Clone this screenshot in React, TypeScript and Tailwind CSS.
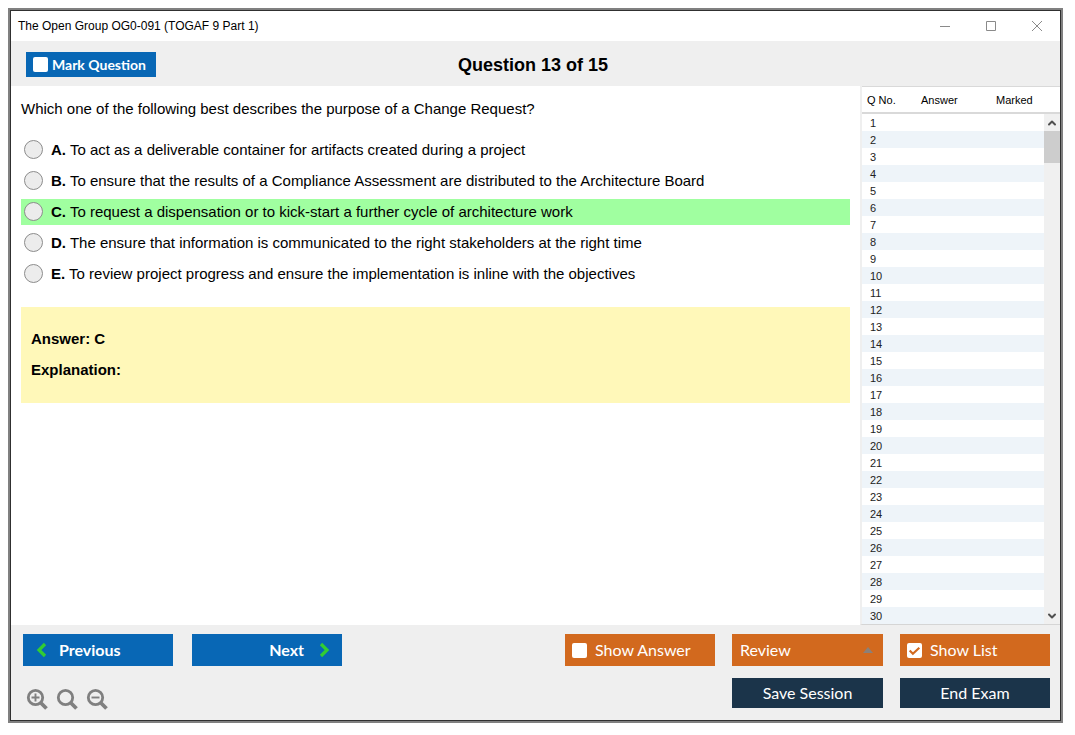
import { useState, type ReactNode } from "react"
import { ChevronDown, ChevronUp } from "lucide-react"
import clsx from "clsx"

const OPTIONS = [
  { letter: "A", text: "To act as a deliverable container for artifacts created during a project" },
  { letter: "B", text: "To ensure that the results of a Compliance Assessment are distributed to the Architecture Board" },
  { letter: "C", text: "To request a dispensation or to kick-start a further cycle of architecture work" },
  { letter: "D", text: "The ensure that information is communicated to the right stakeholders at the right time" },
  { letter: "E", text: "To review project progress and ensure the implementation is inline with the objectives" },
]

const CORRECT = "C"
const ROWS = Array.from({ length: 30 }, (_, i) => i + 1)

function TitleBar() {
  return (
    <div className="flex h-[30px] items-center justify-between bg-white pl-[7px] pr-[17px]">
      <span className="text-[12px] leading-4">The Open Group OG0-091 (TOGAF 9 Part 1)</span>
      <div className="flex gap-[34px] pb-px text-[#8a8a8a]">
        <button aria-label="Minimize">
          <svg width="12" height="12" viewBox="0 0 12 12" stroke="currentColor" fill="none">
            <path d="M1 6.5h10" />
          </svg>
        </button>
        <button aria-label="Maximize">
          <svg width="12" height="12" viewBox="0 0 12 12" stroke="currentColor" fill="none">
            <path d="M1.500 1.500h9v9h-9z" />
          </svg>
        </button>
        <button aria-label="Close">
          <svg width="12" height="12" viewBox="0 0 12 12" stroke="currentColor" fill="none">
            <path d="M1 1l10 10M11 1L1 11" />
          </svg>
        </button>
      </div>
    </div>
  )
}

interface CheckButtonProps {
  label: string
  defaultChecked?: boolean
  className?: string
}

function CheckButton({ label, defaultChecked, className }: CheckButtonProps) {
  return (
    <label className={clsx("flex items-center pl-[7px] text-white", className)}>
      <span className="relative flex">
        <input
          type="checkbox"
          defaultChecked={defaultChecked}
          className="peer size-[15px] appearance-none rounded-[2px] bg-white"
        />
        <svg
          viewBox="0 0 14 14"
          className="pointer-events-none absolute inset-0 hidden size-[15px] peer-checked:block"
          fill="none"
          stroke="#d2691e"
          strokeWidth="2"
        >
          <path d="M2.500 7l3 3 6-5.500" />
        </svg>
      </span>
      {label}
    </label>
  )
}

function ZoomButton({ label, children }: { label: string; children?: ReactNode }) {
  return (
    <button aria-label={label} className="text-[#808080]">
      <svg width="22" height="22" viewBox="0 0 22 22" fill="none" stroke="currentColor">
        <circle cx="9.500" cy="9.500" r="7.200" strokeWidth="2.800" />
        <path d="M14.500 14.500l6 6" strokeWidth="3.800" />
        <g strokeWidth="1.900">{children}</g>
      </svg>
    </button>
  )
}

function QuestionList() {
  return (
    <div className="flex w-[200px] shrink-0 border-b border-l-2 border-b-[#d5d5d5] border-l-[#efefef]">
      <table className="flex-1 border-separate border-spacing-0 text-[11px] leading-4 text-[#222]">
        <thead>
          <tr className="h-7 text-left text-black *:border-t *:border-b-2 *:border-[#d9d9d9] *:py-0 *:font-normal">
            <th className="w-[57px] pl-[5px]">Q No.</th>
            <th className="w-[62px] pl-[2px]">Answer</th>
            <th className="pl-[15px]">Marked</th>
          </tr>
        </thead>
        <tbody>
          {ROWS.map((n) => (
            <tr key={n} className="h-[17px] even:bg-[#eef4f9]">
              <td className="p-0 pl-2">{n}</td>
              <td className="p-0" />
              <td className="p-0" />
            </tr>
          ))}
        </tbody>
      </table>
      <div className="flex w-4 flex-col">
        <div className="h-7 border-t border-b-2 border-[#d9d9d9]" />
        <div className="flex flex-1 flex-col items-center bg-[#f0f0f0]">
          <div className="flex h-[17px] items-center">
            <ChevronUp size={12} strokeWidth={4} color="#505050" />
          </div>
          <div className="h-8 w-full bg-[#cdcdcd]" />
          <div className="mt-auto flex h-[17px] items-center">
            <ChevronDown size={12} strokeWidth={4} color="#505050" />
          </div>
        </div>
      </div>
    </div>
  )
}

export default function App() {
  const [selected, setSelected] = useState<string | null>(null)

  return (
    <div className="bg-white pb-3 pl-2 pr-3 pt-2 font-['Liberation_Sans',Arial,sans-serif] text-black">
      <div className="border-2 border-[#808080]">
        <div className="border border-[#303030]">
          <TitleBar />

          <header className="grid h-[45px] grid-cols-[1fr_auto_1fr] items-center bg-[#efefef] pl-[15px] pr-5 pt-[2px]">
            <CheckButton
              label="Mark Question"
              className="h-[25px] w-[130px] gap-1 bg-[#0867b5] font-['Lato',sans-serif] text-[14px] font-bold"
            />
            <h1 className="text-[18px] font-bold leading-6">Question 13 of 15</h1>
          </header>

          <div className="flex bg-white">
            <main className="min-w-0 flex-1 px-[10px] pt-3 text-[15px]">
              <p className="leading-[22px]">Which one of the following best describes the purpose of a Change Request?</p>
              <div className="mt-[17px] flex flex-col gap-[5px]">
                {OPTIONS.map((o) => (
                  <label
                    key={o.letter}
                    className={clsx("flex min-h-[26px] items-center gap-2 pb-px pl-[3px] leading-[23px]", o.letter === CORRECT && "bg-[#a0ffa0]")}
                  >
                    <input
                      type="radio"
                      name="answer"
                      checked={selected === o.letter}
                      onChange={() => setSelected(o.letter)}
                      className="size-[19px] shrink-0 appearance-none rounded-full border border-[#8c8c8c] bg-[#ececec] checked:bg-[#808080]"
                    />
                    <span>
                      <b>{o.letter}.</b> {o.text}
                    </span>
                  </label>
                ))}
              </div>
              <section className="mt-5 flex flex-col gap-2 bg-[#fff8b9] px-[10px] pb-[22px] pt-5 font-bold leading-[23px]">
                <p>Answer: C</p>
                <p>Explanation:</p>
              </section>
            </main>
            <QuestionList />
          </div>

          <footer className="flex flex-col gap-3 bg-[#efefef] pb-3 pl-3 pr-[10px] pt-[9px] font-['Lato',sans-serif] text-[16px] text-white">
            <div className="flex h-8 justify-between">
              <div className="flex gap-[19px] font-bold">
                <button className="flex w-[150px] items-center gap-3 bg-[#0867b5] pl-3">
                  <svg width="12" height="16" viewBox="0 0 12 16" fill="none" stroke="#32cd32" strokeWidth="3.200">
                    <path d="M10 2L4 8l6 6" />
                  </svg>
                  Previous
                </button>
                <button className="flex w-[150px] items-center justify-end gap-[14px] bg-[#0867b5] pr-3">
                  Next
                  <svg width="12" height="16" viewBox="0 0 12 16" fill="none" stroke="#32cd32" strokeWidth="3.200">
                    <path d="M3 2l6 6-6 6" />
                  </svg>
                </button>
              </div>
              <div className="flex gap-[17px]">
                <CheckButton label="Show Answer" className="w-[150px] gap-2 bg-[#d2691e]" />
                <button aria-haspopup="menu" className="flex w-[151px] items-center justify-between bg-[#d2691e] pl-2 pr-[10px]">
                  Review
                  <svg width="10" height="6" viewBox="0 0 10 6" fill="#8c8078">
                    <path d="M5 0l5 6H0z" />
                  </svg>
                </button>
                <CheckButton label="Show List" defaultChecked className="w-[150px] gap-2 bg-[#d2691e]" />
              </div>
            </div>
            <div className="flex h-[30px] justify-between">
              <div className="flex items-start gap-2 pl-[3px] pt-[10px]">
                <ZoomButton label="Zoom in">
                  <path d="M5.500 9.500h8M9.500 5.500v8" />
                </ZoomButton>
                <ZoomButton label="Reset zoom" />
                <ZoomButton label="Zoom out">
                  <path d="M5.500 9.500h8" />
                </ZoomButton>
              </div>
              <div className="flex gap-[17px]">
                <button className="w-[151px] bg-[#1b344a]">Save Session</button>
                <button className="w-[150px] bg-[#1b344a]">End Exam</button>
              </div>
            </div>
          </footer>
        </div>
      </div>
    </div>
  )
}
